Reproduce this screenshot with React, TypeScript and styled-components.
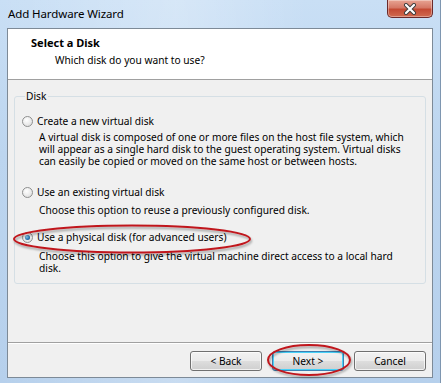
import React from 'react';
import styled, { createGlobalStyle } from 'styled-components';

const GlobalStyle = createGlobalStyle`
  html, body {
    margin: 0;
    padding: 0;
    background: #bcd4ee;
  }
  * {
    box-sizing: border-box;
  }
`;

const Window = styled.div`
  position: relative;
  width: 441px;
  height: 383px;
  display: flex;
  flex-direction: column;
  padding: 0 7px 5px 7px;
  font-family: 'Noto Sans', 'Open Sans', sans-serif;
  color: #000;
  background:
    linear-gradient(90deg, rgba(255, 255, 255, 0) 0%, rgba(255, 255, 255, 0.25) 40%, rgba(255, 255, 255, 0) 70%),
    linear-gradient(180deg, #c9dff5 0%, #bcd5ef 40%, #b6d0ec 100%);
  border-right: 1px solid #7e96b0;
`;

const TitleBar = styled.div`
  height: 28px;
  display: flex;
  align-items: flex-start;
  justify-content: space-between;
`;

const Title = styled.div`
  padding-top: 7px;
  padding-left: 1px;
  font-size: 11.5px;
  line-height: 14px;
  letter-spacing: -0.1px;
`;

const CloseButton = styled.div`
  width: 46px;
  height: 18px;
  display: flex;
  align-items: center;
  justify-content: center;
  border: 1px solid #6b2a2a;
  border-top: none;
  border-radius: 0 0 5px 5px;
  background: linear-gradient(180deg, #e8a493 0%, #d57866 45%, #c44a33 55%, #d06a4f 100%);
  box-shadow: inset 0 0 0 1px rgba(255, 255, 255, 0.35);
`;

const Client = styled.div`
  flex: 1;
  display: flex;
  flex-direction: column;
  border: 1px solid #7d8a97;
  background: #f0f0f0;
`;

const Header = styled.div`
  height: 51px;
  background: #fff;
  border-bottom: 1px solid #a0a0a0;
  padding: 7px 0 0 23px;
`;

const HeaderTitle = styled.div`
  font-weight: bold;
  font-size: 11px;
  line-height: 14px;
`;

const HeaderSub = styled.div`
  margin: 3px 0 0 24px;
  font-size: 10.2px;
  line-height: 14px;
`;

const Body = styled.div`
  flex: 1;
  padding: 10px 6px 0 6px;
`;

const Group = styled.fieldset`
  margin: 0;
  height: 194px;
  padding: 4px 8px 0 7px;
  border: 1px solid #d5dfe5;
  border-radius: 3px;
`;

const Legend = styled.legend`
  margin-left: 3px;
  padding: 0 2px 0 1px;
  font-size: 10.2px;
  line-height: 13px;
`;

const Option = styled.div<{ $gap: number }>`
  margin-top: ${(p) => p.$gap}px;
`;

const RadioRow = styled.div`
  display: flex;
  align-items: center;
  gap: 4px;
  font-size: 10.2px;
  line-height: 13px;
`;

const Radio = styled.span<{ $checked?: boolean }>`
  width: 11px;
  height: 11px;
  flex: none;
  border-radius: 50%;
  border: 1px solid #8e8f8f;
  background: radial-gradient(circle at 40% 35%, #ffffff 0%, #eeeeee 45%, #d6d6d6 100%);
  display: flex;
  align-items: center;
  justify-content: center;

  &::after {
    content: '';
    display: ${(p) => (p.$checked ? 'block' : 'none')};
    width: 5px;
    height: 5px;
    border-radius: 50%;
    background: radial-gradient(circle at 35% 35%, #8fd4f7 0%, #2a77b4 55%, #0e3d6a 100%);
  }
`;

const Desc = styled.div<{ $top: number }>`
  margin: ${(p) => p.$top}px 0 0 17px;
  font-size: 10.2px;
  line-height: 12px;
`;

const Footer = styled.div`
  border-top: 1px solid #a0a0a0;
  box-shadow: inset 0 1px 0 #fff;
  padding: 8px 6px 6px 0;
  display: flex;
  justify-content: flex-end;
  gap: 10px;
`;

const Button = styled.button<{ $focused?: boolean }>`
  width: 72px;
  height: 20px;
  padding: 0;
  font-family: inherit;
  font-size: 10.2px;
  color: #000;
  border-radius: 3px;
  border: 1px solid ${(p) => (p.$focused ? '#3c7fb1' : '#707070')};
  background: linear-gradient(180deg, #f2f2f2 0%, #ebebeb 48%, #dddddd 52%, #cfcfcf 100%);
  box-shadow: inset 0 0 0 1px ${(p) => (p.$focused ? '#48d1f8' : 'rgba(255,255,255,0.7)')};
`;

const Annotations = styled.svg`
  position: absolute;
  top: 0;
  left: 0;
  pointer-events: none;
`;

export default function App() {
  return (
    <>
      <GlobalStyle />
      <Window>
        <TitleBar>
          <Title>Add Hardware Wizard</Title>
          <CloseButton>
            <svg width="14" height="12" viewBox="0 0 14 12">
              <path
                d="M3 2 L11 10 M11 2 L3 10"
                stroke="#3b3b3b"
                strokeWidth="4"
                strokeLinecap="round"
              />
              <path
                d="M3 2 L11 10 M11 2 L3 10"
                stroke="#ffffff"
                strokeWidth="2.2"
                strokeLinecap="round"
              />
            </svg>
          </CloseButton>
        </TitleBar>
        <Client>
          <Header>
            <HeaderTitle>Select a Disk</HeaderTitle>
            <HeaderSub>Which disk do you want to use?</HeaderSub>
          </Header>
          <Body>
            <Group>
              <Legend>Disk</Legend>
              <Option $gap={8}>
                <RadioRow>
                  <Radio />
                  Create a new virtual disk
                </RadioRow>
                <Desc $top={3}>
                  A virtual disk is composed of one or more files on the host file system, which
                  will appear as a single hard disk to the guest operating system. Virtual disks
                  can easily be copied or moved on the same host or between hosts.
                </Desc>
              </Option>
              <Option $gap={19}>
                <RadioRow>
                  <Radio />
                  Use an existing virtual disk
                </RadioRow>
                <Desc $top={5}>Choose this option to reuse a previously configured disk.</Desc>
              </Option>
              <Option $gap={15}>
                <RadioRow>
                  <Radio $checked />
                  Use a physical disk (for advanced users)
                </RadioRow>
                <Desc $top={6}>
                  Choose this option to give the virtual machine direct access to a local hard
                  disk.
                </Desc>
              </Option>
            </Group>
          </Body>
          <Footer>
            <Button>&lt; Back</Button>
            <Button $focused>Next &gt;</Button>
            <Button>Cancel</Button>
          </Footer>
        </Client>
        <Annotations width="441" height="383">
          <defs>
            <filter id="sh" x="-10%" y="-30%" width="120%" height="160%">
              <feDropShadow dx="1" dy="2" stdDeviation="1.2" floodColor="#000" floodOpacity="0.35" />
            </filter>
          </defs>
          <ellipse cx="132" cy="239" rx="118" ry="13.5" fill="none" stroke="#c0191f" strokeWidth="2" filter="url(#sh)" />
          <ellipse cx="309" cy="360" rx="41" ry="15" fill="none" stroke="#c0191f" strokeWidth="2" filter="url(#sh)" />
        </Annotations>
      </Window>
    </>
  );
}
